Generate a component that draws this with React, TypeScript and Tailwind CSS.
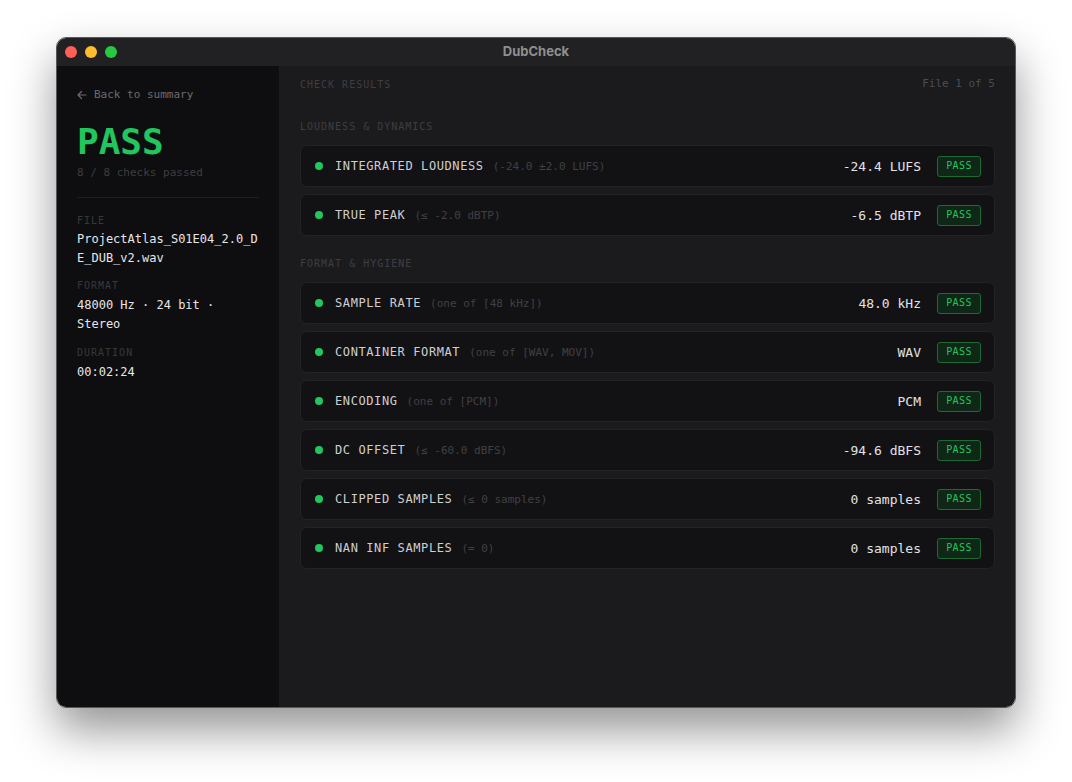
import React from "react";

const mono = { fontFamily: '"DejaVu Sans Mono", "Liberation Mono", monospace' };

type Check = { name: string; spec: string; value: string };

const loudness: Check[] = [
  { name: "INTEGRATED LOUDNESS", spec: "(-24.0 ±2.0 LUFS)", value: "-24.4 LUFS" },
  { name: "TRUE PEAK", spec: "(≤ -2.0 dBTP)", value: "-6.5 dBTP" },
];

const format: Check[] = [
  { name: "SAMPLE RATE", spec: "(one of [48 kHz])", value: "48.0 kHz" },
  { name: "CONTAINER FORMAT", spec: "(one of [WAV, MOV])", value: "WAV" },
  { name: "ENCODING", spec: "(one of [PCM])", value: "PCM" },
  { name: "DC OFFSET", spec: "(≤ -60.0 dBFS)", value: "-94.6 dBFS" },
  { name: "CLIPPED SAMPLES", spec: "(≤ 0 samples)", value: "0 samples" },
  { name: "NAN INF SAMPLES", spec: "(= 0)", value: "0 samples" },
];

function Row({ c }: { c: Check }) {
  return (
    <div className="box-border flex h-[42px] items-center rounded-[7px] border border-[#232326] bg-[#121215] pl-[14px] pr-[13px]">
      <span className="h-[8px] w-[8px] shrink-0 rounded-full bg-[#22c55e]" />
      <span className="ml-[12px] text-[12px] leading-none tracking-[0.05em] text-[#cfcfd1]">{c.name}</span>
      <span className="ml-[9px] text-[11px] leading-none text-[#404044]">{c.spec}</span>
      <span className="ml-auto text-[13px] leading-none text-[#e2e2e4]">{c.value}</span>
      <span className="ml-[16px] box-border flex h-[21px] w-[44px] items-center justify-center rounded-[3px] border border-[#1d6a35] bg-[#0f2717] text-[10px] leading-none tracking-[0.04em] text-[#22c55e]">
        PASS
      </span>
    </div>
  );
}

export default function App() {
  return (
    <div className="h-[782px] w-[1072px] bg-white pl-[56px] pt-[37px]" style={mono}>
      <div className="box-border flex h-[671px] w-[960px] flex-col overflow-hidden rounded-[10px] border border-[#58585a] shadow-[0_22px_45px_rgba(0,0,0,0.42)]">
        {/* title bar */}
        <div className="relative flex h-[28px] shrink-0 items-center bg-[#212123]">
          <div className="flex items-center gap-[8px] pl-[8px]">
            <span className="h-[12px] w-[12px] rounded-full bg-[#ff5f57]" />
            <span className="h-[12px] w-[12px] rounded-full bg-[#febc2e]" />
            <span className="h-[12px] w-[12px] rounded-full bg-[#28c840]" />
          </div>
          <div
            className="absolute inset-0 flex items-center justify-center text-[13px] font-bold text-[#8f8f92]"
            style={{ fontFamily: 'Inter, "Liberation Sans", sans-serif' }}
          >
            DubCheck
          </div>
        </div>
        <div className="flex min-h-0 flex-1">
          {/* sidebar */}
          <div className="box-border flex w-[222px] shrink-0 flex-col bg-[#0e0e10] pl-[20px] pr-[20px] pt-[21px]">
            <div className="flex h-[16px] items-center gap-[7px] text-[11px] text-[#6b6b70]">
              <svg width="10" height="10" viewBox="0 0 10 10" fill="none" stroke="#6b6b70" strokeWidth="1.2" strokeLinecap="round" strokeLinejoin="round">
                <path d="M9 5H1.2M4.5 1.5L1 5l3.5 3.5" />
              </svg>
              <span>Back to summary</span>
            </div>
            <div className="mt-[21px] text-[36px] font-bold leading-[36px] text-[#22c55e]">PASS</div>
            <div className="mt-[5px] text-[11px] leading-[16px] text-[#3d3d41]">8 / 8 checks passed</div>
            <div className="mt-[16px] h-px bg-[#1f1f22]" />
            <div className="mt-[16px] text-[10px] leading-[14px] tracking-[0.1em] text-[#38383c]">FILE</div>
            <div className="mt-[2px] break-all text-[12px] leading-[19px] text-[#e6e6e8]">ProjectAtlas_S01E04_2.0_DE_DUB_v2.wav</div>
            <div className="mt-[11px] text-[10px] leading-[14px] tracking-[0.1em] text-[#38383c]">FORMAT</div>
            <div className="mt-[3px] text-[12px] leading-[19px] text-[#e6e6e8]">48000 Hz · 24 bit · Stereo</div>
            <div className="mt-[12px] text-[10px] leading-[14px] tracking-[0.1em] text-[#38383c]">DURATION</div>
            <div className="mt-[3px] text-[12px] leading-[19px] text-[#e6e6e8]">00:02:24</div>
          </div>
          {/* main */}
          <div className="flex min-w-0 flex-1 flex-col bg-[#1b1b1d] pl-[21px] pr-[20px] pt-[11px]">
            <div className="flex h-[14px] items-center justify-between">
              <span className="text-[10px] tracking-[0.1em] text-[#3e3e42]">CHECK RESULTS</span>
              <span className="text-[11px] text-[#4c4c50]">File 1 of 5</span>
            </div>
            <div className="mt-[29px] h-[14px] text-[10px] leading-[14px] tracking-[0.1em] text-[#3e3e42]">LOUDNESS &amp; DYNAMICS</div>
            <div className="mt-[11px] flex flex-col gap-[7px]">
              {loudness.map((c) => (
                <Row key={c.name} c={c} />
              ))}
            </div>
            <div className="mt-[21px] h-[14px] text-[10px] leading-[14px] tracking-[0.1em] text-[#3e3e42]">FORMAT &amp; HYGIENE</div>
            <div className="mt-[11px] flex flex-col gap-[7px]">
              {format.map((c) => (
                <Row key={c.name} c={c} />
              ))}
            </div>
          </div>
        </div>
      </div>
    </div>
  );
}
